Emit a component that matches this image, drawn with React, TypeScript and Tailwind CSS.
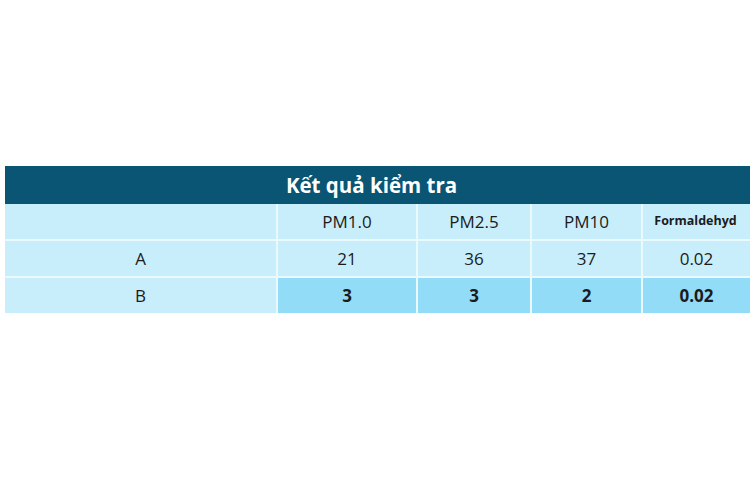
export default function App() {
  const font = { fontFamily: '"Open Sans", "Noto Sans", sans-serif' };
  const light = "bg-[#c8eefb]";
  const dark = "bg-[#92dcf8]";
  const cell = "flex items-center justify-center text-[17px] text-[#1b1b1b]";
  return (
    <div className="w-[750px] h-[500px] bg-white pt-[166px] pl-[5px]" style={font}>
      <div className="w-[745px]">
        <div className="h-[38px] bg-[#0a5474] flex items-center justify-center pr-[12px]">
          <span className="text-white font-bold text-[20.5px]">Kết quả kiểm tra</span>
        </div>
        <div className="grid grid-cols-[271px_138px_112px_109px_107px] grid-rows-[35px_35px_35px] gap-[2px] bg-[#e9f9fe]">
          <div className={`${light}`}></div>
          <div className={`${cell} ${light}`}>PM1.0</div>
          <div className={`${cell} ${light}`}>PM2.5</div>
          <div className={`${cell} ${light}`}>PM10</div>
          <div className={`${cell} ${light} !text-[12.5px] font-bold pr-[2px]`}>Formaldehyd</div>

          <div className={`${cell} ${light}`}>A</div>
          <div className={`${cell} ${light}`}>21</div>
          <div className={`${cell} ${light}`}>36</div>
          <div className={`${cell} ${light}`}>37</div>
          <div className={`${cell} ${light}`}>0.02</div>

          <div className={`${cell} ${light}`}>B</div>
          <div className={`${cell} ${dark} font-bold`}>3</div>
          <div className={`${cell} ${dark} font-bold`}>3</div>
          <div className={`${cell} ${dark} font-bold`}>2</div>
          <div className={`${cell} ${dark} font-bold`}>0.02</div>
        </div>
      </div>
    </div>
  );
}
